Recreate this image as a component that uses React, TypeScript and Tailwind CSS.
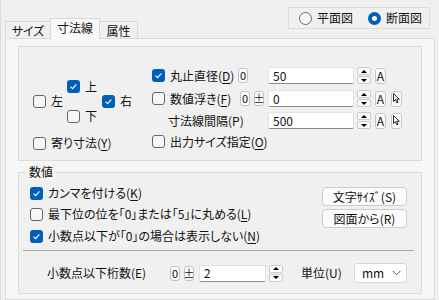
import React from 'react'

interface BoxProps {
  checked?: boolean
}

function CheckBox({ checked }: BoxProps) {
  if (checked) {
    return (
      <span className="w-[13px] h-[13px] rounded-[3px] bg-[#005fb8] flex items-center justify-center shrink-0">
        <svg width="9" height="9" viewBox="0 0 9 9">
          <path d="M1.6 4.7 L3.6 6.6 L7.4 2.4" stroke="white" strokeWidth="1.1" fill="none" />
        </svg>
      </span>
    )
  }
  return <span className="w-[13px] h-[13px] rounded-[3px] border border-[#666] bg-[#f7f7f7] shrink-0" />
}

function Radio({ checked }: BoxProps) {
  if (checked) {
    return (
      <span className="w-[13px] h-[13px] rounded-full bg-[#005fb8] flex items-center justify-center shrink-0">
        <span className="w-[5px] h-[5px] rounded-full bg-white" />
      </span>
    )
  }
  return <span className="w-[13px] h-[13px] rounded-full border border-[#6b6b6b] bg-[#f7f7f7] shrink-0" />
}

function Check({ checked, children, className = '' }: { checked?: boolean; children: React.ReactNode; className?: string }) {
  return (
    <div className={`flex items-center gap-[5px] whitespace-nowrap ${className}`}>
      <CheckBox checked={checked} />
      <span>{children}</span>
    </div>
  )
}

function Key({ k }: { k: string }) {
  return <span className="underline underline-offset-[2px] decoration-[1px]">{k}</span>
}

function SmallBtn({ children, className = '' }: { children: React.ReactNode; className?: string }) {
  return (
    <span className={`w-[10px] h-[15px] rounded-[3px] border border-[#c2c2c2] bg-[#fbfbfb] flex items-center justify-center text-[11px] leading-none shrink-0 ${className}`}>
      {children}
    </span>
  )
}

function Spinner({ className = '' }: { className?: string }) {
  return (
    <div className={`flex flex-col gap-[1px] shrink-0 ${className}`}>
      <span className="w-[14px] h-[8px] rounded-[2px] border border-[#cacaca] bg-[#fafafa] flex items-center justify-center">
        <svg width="6" height="3" viewBox="0 0 6 3"><path d="M0 3 L3 0 L6 3 Z" fill="black" /></svg>
      </span>
      <span className="w-[14px] h-[8px] rounded-[2px] border border-[#cacaca] bg-[#fafafa] flex items-center justify-center">
        <svg width="6" height="3" viewBox="0 0 6 3"><path d="M0 0 L6 0 L3 3 Z" fill="black" /></svg>
      </span>
    </div>
  )
}

function TextBox({ value, className = '' }: { value: string; className?: string }) {
  return (
    <div className={`h-[17px] bg-white border border-[#e2e2e2] border-b-[#8a8a8a] rounded-[2px] pl-[4px] flex items-center shrink-0 ${className}`}>
      {value}
    </div>
  )
}

function CursorBtn() {
  return (
    <span className="w-[11px] h-[16px] rounded-[3px] border border-[#c6c6c6] bg-[#fbfbfb] flex items-center justify-center shrink-0 ml-[5px]">
      <svg width="7" height="11" viewBox="0 0 7 11">
        <path d="M0.5 0.5 L0.5 8.5 L2.5 6.6 L3.8 9.8 L5 9.3 L3.8 6.2 L6.3 6.2 Z" fill="white" stroke="#111" strokeWidth="0.9" strokeLinejoin="round" />
      </svg>
    </span>
  )
}

function ABtn() {
  return (
    <span className="w-[11px] h-[16px] rounded-[3px] border border-[#c6c6c6] bg-[#fbfbfb] flex items-center justify-center shrink-0 ml-[4px] text-[12px] leading-none">
      A
    </span>
  )
}

function Tab({ active, children, className = '' }: { active?: boolean; children: React.ReactNode; className?: string }) {
  return (
    <div
      className={
        active
          ? `relative z-10 h-[21px] -mb-[1px] border border-b-0 border-[#d9d9d9] bg-[#f9f9f9] flex items-start justify-center pt-[1px] ${className}`
          : `h-[17px] border border-b-0 border-[#d9d9d9] bg-[#f0f0f0] flex items-start justify-center pt-[1px] ${className}`
      }
    >
      {children}
    </div>
  )
}

export default function App() {
  return (
    <div className="w-[439px] h-[300px] overflow-hidden bg-[#f0f0f0] text-[12px] leading-[16px] text-[#111] font-['Noto_Sans_CJK_JP','Noto_Sans',sans-serif] [font-feature-settings:'palt'] border-l border-[#dadada]">
      {/* header: tabs + view radios */}
      <div className="flex items-start justify-between h-[38px] pl-[4px] pr-[9px]">
        <div className="flex items-end h-full">
          <Tab className="w-[46px]">サイズ</Tab>
          <Tab active className="w-[50px] -ml-[1px]">寸法線</Tab>
          <Tab className="w-[39px] -ml-[1px]">属性</Tab>
        </div>
        <div className="mt-[7px] w-[142px] h-[22px] border border-[#dcdcdc] flex items-center pl-[10px]">
          <Radio />
          <span className="ml-[5px]">平面図</span>
          <span className="ml-[15px] flex items-center">
            <Radio checked />
          </span>
          <span className="ml-[5px]">断面図</span>
        </div>
      </div>

      {/* tab page */}
      <div className="ml-[4px] w-[430px] h-[262px] border border-[#d9d9d9] bg-[#f6f6f6] pt-[7px] pl-[12px]">
        {/* upper group */}
        <div className="w-[404px] h-[115px] border border-[#dcdcdc] bg-[#f0f0f0] flex">
          <div className="w-[133px] pl-[14px] pt-[32px] flex flex-col">
            <div className="h-[15px] pl-[34px] flex items-center">
              <Check checked>上</Check>
            </div>
            <div className="h-[14px] flex items-center">
              <Check className="w-[69px]">左</Check>
              <Check checked>右</Check>
            </div>
            <div className="h-[16px] pl-[34px] flex items-center">
              <Check>下</Check>
            </div>
            <div className="h-[16px] mt-[11px] flex items-center">
              <Check>寄り寸法(<Key k="Y" />)</Check>
            </div>
          </div>

          <div className="pt-[20px] flex flex-col">
            <div className="h-[17px] flex items-center">
              <Check checked className="w-[85px]">丸止直径(<Key k="D" />)</Check>
              <div className="w-[31px] flex items-center">
                <SmallBtn className="ml-[1px]">0</SmallBtn>
              </div>
              <TextBox value="50" className="w-[86px]" />
              <Spinner className="ml-[3px]" />
              <ABtn />
            </div>
            <div className="h-[17px] mt-[6px] flex items-center">
              <Check className="w-[85px]">数値浮き(<Key k="F" />)</Check>
              <div className="w-[31px] flex items-center">
                <SmallBtn className="ml-[3px]">0</SmallBtn>
                <SmallBtn className="ml-[4px]">±</SmallBtn>
              </div>
              <TextBox value="0" className="w-[86px]" />
              <Spinner className="ml-[3px]" />
              <ABtn />
              <CursorBtn />
            </div>
            <div className="h-[17px] mt-[5px] flex items-center">
              <span className="w-[116px] pl-[16px] whitespace-nowrap">寸法線間隔(P)</span>
              <TextBox value="500" className="w-[86px]" />
              <Spinner className="ml-[3px]" />
              <ABtn />
              <CursorBtn />
            </div>
            <div className="h-[17px] mt-[4px] flex items-center">
              <Check>出力サイズ指定(<Key k="O" />)</Check>
            </div>
          </div>
        </div>

        {/* 数値 group */}
        <div className="relative mt-[11px] w-[404px] h-[122px] border border-[#dcdcdc] bg-[#f0f0f0] pl-[11px] pr-[14px] pt-[12px] flex flex-col">
          <span className="absolute left-[7px] -top-[9px] px-[3px] bg-[#f3f3f3] leading-[16px]">数値</span>
          <div className="flex items-start justify-between">
            <div className="flex flex-col">
              <div className="h-[16px] flex items-center">
                <Check checked>カンマを付ける(<Key k="K" />)</Check>
              </div>
              <div className="h-[16px] mt-[5px] flex items-center">
                <Check>最下位の位を「0」または「5」に丸める(<Key k="L" />)</Check>
              </div>
              <div className="h-[16px] mt-[6px] flex items-center">
                <Check checked>小数点以下が「0」の場合は表示しない(<Key k="N" />)</Check>
              </div>
            </div>
            <div className="mt-[2px] flex flex-col gap-[3px]">
              <button className="w-[85px] h-[19px] rounded-[4px] border border-[#cccccc] bg-[#fbfbfb] flex items-center justify-center leading-none">
                文字ｻｲｽﾞ(S)
              </button>
              <button className="w-[85px] h-[19px] rounded-[4px] border border-[#cccccc] bg-[#fbfbfb] flex items-center justify-center leading-none">
                図面から(R)
              </button>
            </div>
          </div>
          <div className="mt-[6px] ml-[-7px] w-[391px] h-px bg-[#a8a8a8]" />
          <div className="mt-[12px] h-[20px] flex items-center">
            <span className="w-[140px] pl-[17px] whitespace-nowrap">小数点以下桁数(E)</span>
            <SmallBtn>0</SmallBtn>
            <SmallBtn className="ml-[4px]">±</SmallBtn>
            <TextBox value="2" className="w-[67px] ml-[5px]" />
            <Spinner className="ml-[3px]" />
            <span className="ml-[18px] w-[53px] whitespace-nowrap">単位(U)</span>
            <div className="w-[53px] h-[20px] bg-white border border-[#d6d6d6] rounded-[3px] flex items-center justify-between pl-[7px] pr-[5px]">
              <span>mm</span>
              <svg width="9" height="6" viewBox="0 0 9 6">
                <path d="M0.5 0.8 L4.5 4.8 L8.5 0.8" stroke="#555" strokeWidth="1" fill="none" />
              </svg>
            </div>
          </div>
        </div>
      </div>
    </div>
  )
}
